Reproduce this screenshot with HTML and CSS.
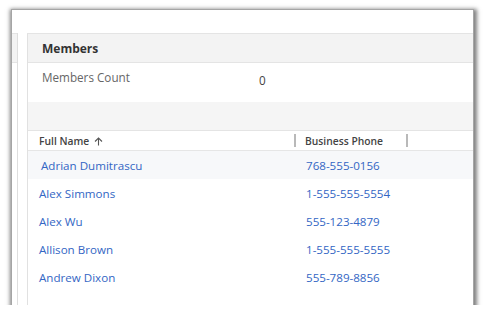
FILE: index.html
```html
<!DOCTYPE html>
<html lang="en">
<head>
<meta charset="utf-8">
<link rel="stylesheet" href="styles.css">
</head>
<body>
<div class="frame">
  <div class="side"><div class="side-head"></div></div>
  <section class="card">
    <header class="card-head">Members</header>
    <div class="field">
      <span class="label">Members Count</span>
      <span class="value">0</span>
    </div>
    <div class="band"></div>
    <div class="grid">
      <div class="grid-head">
        <div class="col-name">Full Name
          <svg class="sort" width="9" height="9" viewBox="0 0 9 9"><path d="M4.5 8.5V1M1 4.5L4.5 1L8 4.5" fill="none" stroke="#555" stroke-width="1.1"/></svg>
        </div>
        <div class="sep"></div>
        <div class="col-phone">Business Phone</div>
        <div class="sep"></div>
      </div>
      <div class="row first"><a class="col-name link">Adrian Dumitrascu</a><a class="col-phone link">768-555-0156</a></div>
      <div class="row"><a class="col-name link">Alex Simmons</a><a class="col-phone link">1-555-555-5554</a></div>
      <div class="row"><a class="col-name link">Alex Wu</a><a class="col-phone link">555-123-4879</a></div>
      <div class="row"><a class="col-name link">Allison Brown</a><a class="col-phone link">1-555-555-5555</a></div>
      <div class="row"><a class="col-name link">Andrew Dixon</a><a class="col-phone link">555-789-8856</a></div>
    </div>
  </section>
</div>
</body>
</html>
```
FILE: styles.css
```css
* { box-sizing: border-box; }
html, body { margin: 0; padding: 0; background: #fff; }
body {
  font-family: "Open Sans", "Noto Sans", sans-serif;
  color: #333;
  padding: 10px 0 0 12px;
}
.frame {
  width: 461px;
  height: 295px;
  background: #fff;
  overflow: hidden;
  display: flex;
  box-shadow: 0 0 0 1px #a5a5a5, 1px 2px 4px 3px rgba(0,0,0,0.5);
}
.side {
  flex: 0 0 6px;
  margin-top: 23px;
  border-right: 1px solid #dedede;
}
.side-head {
  height: 30px;
  background: #f3f3f3;
  border-top: 1px solid #e4e4e4;
  border-bottom: 1px solid #e4e4e4;
}
.card {
  flex: 0 0 520px;
  margin-left: 9px;
  margin-top: 23px;
  border-left: 1px solid #e1e1e1;
  border-top: 1px solid #e4e4e4;
}
.card-head {
  height: 29px;
  background: #f3f3f3;
  border-bottom: 1px solid #e4e4e4;
  padding-left: 14px;
  display: flex;
  align-items: center;
  font-size: 12px;
  font-weight: 700;
  color: #333;
}
.field {
  height: 39px;
  display: flex;
  padding-left: 14px;
  padding-top: 6px;
  font-size: 11.7px;
}
.label { width: 217px; color: #666; }
.value { color: #444; padding-top: 3px; }
.band {
  height: 29px;
  background: #f5f5f5;
  border-bottom: 1px solid #e4e4e4;
}
.grid-head {
  height: 20px;
  display: flex;
  align-items: center;
  border-bottom: 1px solid #e6e6e6;
  font-size: 10.3px;
  font-weight: 600;
  color: #444;
}
.col-name {
  width: 266px;
  padding-left: 11px;
  display: flex;
  align-items: center;
  gap: 5px;
}
.sort { margin-top: 1px; }
.sep {
  width: 2px;
  height: 13px;
  background: #b9b9b9;
}
.grid-head .col-phone {
  width: 110px;
  padding-left: 9px;
}
.row {
  height: 28px;
  display: flex;
  align-items: center;
  font-size: 11.6px;
}
.row.first { background: #f7f8fa; padding-left: 2px; }
.row .col-phone { padding-left: 12px; }
.row.first .col-phone { padding-left: 10px; }
.link { color: #3366c4; text-decoration: none; }
```
